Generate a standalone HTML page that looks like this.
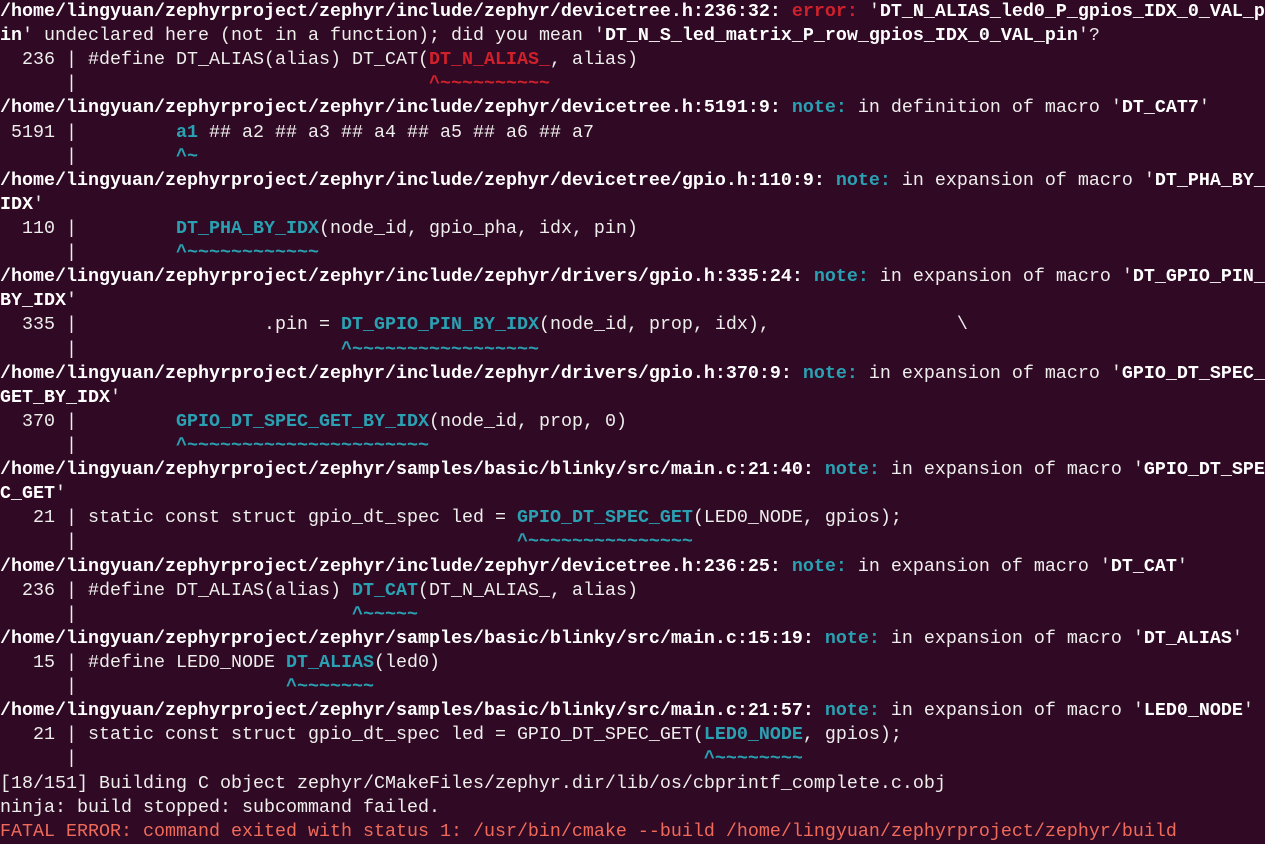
<!DOCTYPE html>
<html><head><meta charset="utf-8"><style>
html,body{margin:0;padding:0;background:#300a24;width:1265px;height:840px;overflow:hidden}
#t{position:absolute;left:0;top:0px;font-family:"Liberation Mono",monospace;font-size:18.33px;color:#eeeeec}
#t div{white-space:pre;height:24.12px;line-height:24.12px}
b{font-weight:bold;color:#fff}
.c{color:#2aa1b3;font-weight:bold}
.r{color:#d0202c;font-weight:bold}
.f{color:#f06a5a}
</style></head><body><div id="t">
<div><b>/home/lingyuan/zephyrproject/zephyr/include/zephyr/devicetree.h:236:32: </b><span class="r">error: </span>'<b>DT_N_ALIAS_led0_P_gpios_IDX_0_VAL_p</b></div>
<div><b>in</b>' undeclared here (not in a function); did you mean '<b>DT_N_S_led_matrix_P_row_gpios_IDX_0_VAL_pin</b>'?</div>
<div>  236 | #define DT_ALIAS(alias) DT_CAT(<span class="r">DT_N_ALIAS_</span>, alias)</div>
<div>      |                                <span class="r">^~~~~~~~~~~</span></div>
<div><b>/home/lingyuan/zephyrproject/zephyr/include/zephyr/devicetree.h:5191:9: </b><span class="c">note: </span>in definition of macro '<b>DT_CAT7</b>'</div>
<div> 5191 |         <span class="c">a1</span> ## a2 ## a3 ## a4 ## a5 ## a6 ## a7</div>
<div>      |         <span class="c">^~</span></div>
<div><b>/home/lingyuan/zephyrproject/zephyr/include/zephyr/devicetree/gpio.h:110:9: </b><span class="c">note: </span>in expansion of macro '<b>DT_PHA_BY_</b></div>
<div><b>IDX</b>'</div>
<div>  110 |         <span class="c">DT_PHA_BY_IDX</span>(node_id, gpio_pha, idx, pin)</div>
<div>      |         <span class="c">^~~~~~~~~~~~~</span></div>
<div><b>/home/lingyuan/zephyrproject/zephyr/include/zephyr/drivers/gpio.h:335:24: </b><span class="c">note: </span>in expansion of macro '<b>DT_GPIO_PIN_</b></div>
<div><b>BY_IDX</b>'</div>
<div>  335 |                 .pin = <span class="c">DT_GPIO_PIN_BY_IDX</span>(node_id, prop, idx),                 \</div>
<div>      |                        <span class="c">^~~~~~~~~~~~~~~~~~</span></div>
<div><b>/home/lingyuan/zephyrproject/zephyr/include/zephyr/drivers/gpio.h:370:9: </b><span class="c">note: </span>in expansion of macro '<b>GPIO_DT_SPEC_</b></div>
<div><b>GET_BY_IDX</b>'</div>
<div>  370 |         <span class="c">GPIO_DT_SPEC_GET_BY_IDX</span>(node_id, prop, 0)</div>
<div>      |         <span class="c">^~~~~~~~~~~~~~~~~~~~~~~</span></div>
<div><b>/home/lingyuan/zephyrproject/zephyr/samples/basic/blinky/src/main.c:21:40: </b><span class="c">note: </span>in expansion of macro '<b>GPIO_DT_SPE</b></div>
<div><b>C_GET</b>'</div>
<div>   21 | static const struct gpio_dt_spec led = <span class="c">GPIO_DT_SPEC_GET</span>(LED0_NODE, gpios);</div>
<div>      |                                        <span class="c">^~~~~~~~~~~~~~~~</span></div>
<div><b>/home/lingyuan/zephyrproject/zephyr/include/zephyr/devicetree.h:236:25: </b><span class="c">note: </span>in expansion of macro '<b>DT_CAT</b>'</div>
<div>  236 | #define DT_ALIAS(alias) <span class="c">DT_CAT</span>(DT_N_ALIAS_, alias)</div>
<div>      |                         <span class="c">^~~~~~</span></div>
<div><b>/home/lingyuan/zephyrproject/zephyr/samples/basic/blinky/src/main.c:15:19: </b><span class="c">note: </span>in expansion of macro '<b>DT_ALIAS</b>'</div>
<div>   15 | #define LED0_NODE <span class="c">DT_ALIAS</span>(led0)</div>
<div>      |                   <span class="c">^~~~~~~~</span></div>
<div><b>/home/lingyuan/zephyrproject/zephyr/samples/basic/blinky/src/main.c:21:57: </b><span class="c">note: </span>in expansion of macro '<b>LED0_NODE</b>'</div>
<div>   21 | static const struct gpio_dt_spec led = GPIO_DT_SPEC_GET(<span class="c">LED0_NODE</span>, gpios);</div>
<div>      |                                                         <span class="c">^~~~~~~~~</span></div>
<div>[18/151] Building C object zephyr/CMakeFiles/zephyr.dir/lib/os/cbprintf_complete.c.obj</div>
<div>ninja: build stopped: subcommand failed.</div>
<div class="f">FATAL ERROR: command exited with status 1: /usr/bin/cmake --build /home/lingyuan/zephyrproject/zephyr/build</div>
</div></body></html>
